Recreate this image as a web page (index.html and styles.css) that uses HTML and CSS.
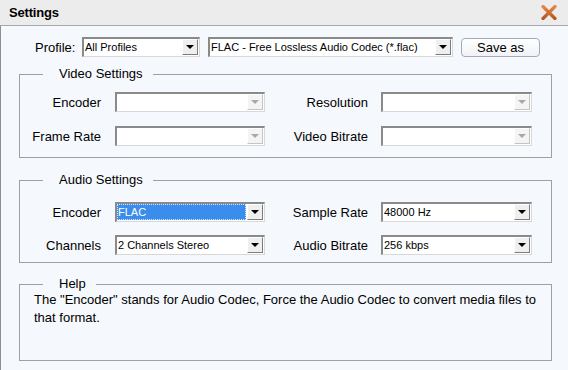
FILE: index.html
```html
<!DOCTYPE html>
<html lang="en">
<head>
<meta charset="utf-8">
<title>Settings</title>
<link rel="stylesheet" href="styles.css">
</head>
<body>
<div class="window">
  <div class="titlebar">
    <span class="title">Settings</span>
    <svg class="close" width="16" height="15" viewBox="0 0 16 15" aria-label="Close">
      <defs>
        <linearGradient id="xg" x1="0" y1="0" x2="0" y2="1">
          <stop offset="0" stop-color="#e4874a"/>
          <stop offset="1" stop-color="#b9571f"/>
        </linearGradient>
      </defs>
      <path d="M2 1.5 L14 13.5 M14 1.5 L2 13.5" stroke="url(#xg)" stroke-width="3.2" stroke-linecap="round" fill="none"/>
    </svg>
  </div>
  <div class="content">
    <div class="profile-row">
      <span class="profile-label">Profile:</span>
      <div class="select sel-profile"><span class="value">All Profiles</span><span class="arrow"></span></div>
      <div class="select sel-format"><span class="value">FLAC - Free Lossless Audio Codec (*.flac)</span><span class="arrow"></span></div>
      <button class="btn">Save as</button>
    </div>

    <fieldset class="group group-video">
      <legend>Video Settings</legend>
      <div class="grid">
        <span class="lbl">Encoder</span>
        <div class="select disabled"><span class="value"></span><span class="arrow"></span></div>
        <span class="lbl lbl-right">Resolution</span>
        <div class="select disabled"><span class="value"></span><span class="arrow"></span></div>
        <span class="lbl">Frame Rate</span>
        <div class="select disabled"><span class="value"></span><span class="arrow"></span></div>
        <span class="lbl lbl-right">Video Bitrate</span>
        <div class="select disabled"><span class="value"></span><span class="arrow"></span></div>
      </div>
    </fieldset>

    <fieldset class="group group-audio">
      <legend>Audio Settings</legend>
      <div class="grid grid-audio">
        <span class="lbl">Encoder</span>
        <div class="select focused"><span class="value">FLAC</span><span class="arrow"></span></div>
        <span class="lbl lbl-right">Sample Rate</span>
        <div class="select"><span class="value">48000 Hz</span><span class="arrow"></span></div>
        <span class="lbl">Channels</span>
        <div class="select"><span class="value">2 Channels Stereo</span><span class="arrow"></span></div>
        <span class="lbl lbl-right">Audio Bitrate</span>
        <div class="select"><span class="value">256 kbps</span><span class="arrow"></span></div>
      </div>
    </fieldset>

    <fieldset class="group group-help">
      <legend class="legend-help">Help</legend>
      <p class="help-text">The "Encoder" stands for Audio Codec, Force the Audio Codec to convert media files to that format.</p>
    </fieldset>
  </div>
</div>
</body>
</html>
```

FILE: styles.css
```css
* {
  box-sizing: border-box;
}

html, body {
  margin: 0;
  padding: 0;
}

body {
  width: 568px;
  height: 370px;
  overflow: hidden;
  font-family: "Liberation Sans", Arial, sans-serif;
  font-size: 13px;
  color: #000;
  background: #f5f8fc;
}

.window {
  width: 568px;
  height: 370px;
  display: flex;
  flex-direction: column;
}

.titlebar {
  height: 26px;
  flex: none;
  display: flex;
  align-items: center;
  justify-content: space-between;
  padding: 0 9px 1px 9px;
  background: #ececec;
  border-bottom: 1px solid #a8a8a8;
}

.title {
  font-weight: bold;
  font-size: 13px;
  letter-spacing: -0.2px;
}

.close {
  display: block;
  margin-right: 2px;
}

.content {
  flex: 1;
  border-left: 1px solid #8f8f8f;
  background: #f5f8fc;
}

/* profile row */
.profile-row {
  display: flex;
  align-items: center;
  margin-top: 11px;
  padding-left: 34px;
  height: 20px;
}

.profile-label {
  width: 47px;
  flex: none;
}

.sel-profile {
  width: 118px;
  margin-right: 8px;
}

.sel-format {
  width: 245px;
  margin-right: 8px;
}

.btn {
  width: 79px;
  height: 19px;
  padding: 0;
  font-family: inherit;
  font-size: 13px;
  color: #000;
  border: 1px solid #a3abb8;
  border-radius: 4px;
  background: linear-gradient(#ffffff, #f0f2f6);
}

/* select boxes */
.select {
  height: 20px;
  display: flex;
  align-items: stretch;
  background: #fff;
  border-style: solid;
  border-width: 2px 1px 1px 2px;
  border-color: #8a8a8a #d8d8d8 #d8d8d8 #8a8a8a;
  flex: none;
}

.value {
  flex: 1;
  min-width: 0;
  font-size: 11px;
  line-height: 17px;
  padding-left: 1px;
  white-space: nowrap;
  overflow: hidden;
}

.arrow {
  width: 16px;
  flex: none;
  margin: 0 1px 1px 0;
  background: #efefef;
  border: 1px solid;
  border-color: #ffffff #7c7c7c #7c7c7c #ffffff;
  box-shadow: 0 0 0 0 transparent;
  display: flex;
  align-items: center;
  justify-content: center;
}

.arrow::before {
  content: "";
  width: 0;
  height: 0;
  border-left: 4px solid transparent;
  border-right: 4px solid transparent;
  border-top: 4px solid #000;
}

.disabled .arrow {
  background: #f4f4f4;
  border-color: #ffffff #c4c4c4 #c4c4c4 #ffffff;
}

.disabled .arrow::before {
  border-top-color: #a8a8a8;
}

.focused .value {
  background: #3b8ded;
  color: #fff;
  border: 1px dotted #d8e8ff;
  margin: 0 1px 1px 0;
  line-height: 14px;
  padding-left: 0;
}

/* groups */
.group {
  margin: 0 16px 0 18px;
  padding: 0;
  border: 1px solid #a0a0a0;
  min-width: 0;
}

.group legend {
  margin-left: 23px;
  padding: 0 10px 0 16px;
  line-height: 14px;
  font-size: 13px;
}

.group-video {
  margin-top: 10px;
  padding: 11px 0 11px 0;
}

.group-audio {
  margin-top: 15px;
  padding: 15px 0 7px 0;
}

.group-help {
  margin-top: 14px;
  height: 84px;
}

.legend-help {
  padding-right: 13px;
}

.grid {
  display: grid;
  grid-template-columns: 95px 150px 116px 151px;
  grid-auto-rows: 20px;
  row-gap: 14px;
  align-items: center;
}

.grid-audio {
  row-gap: 13px;
}

.lbl {
  text-align: right;
  padding-right: 14px;
  white-space: nowrap;
}

.lbl-right {
  padding-right: 13px;
}

.help-text {
  margin: 0;
  padding: 0 6px 0 14px;
  line-height: 18px;
  font-size: 13px;
}
```
